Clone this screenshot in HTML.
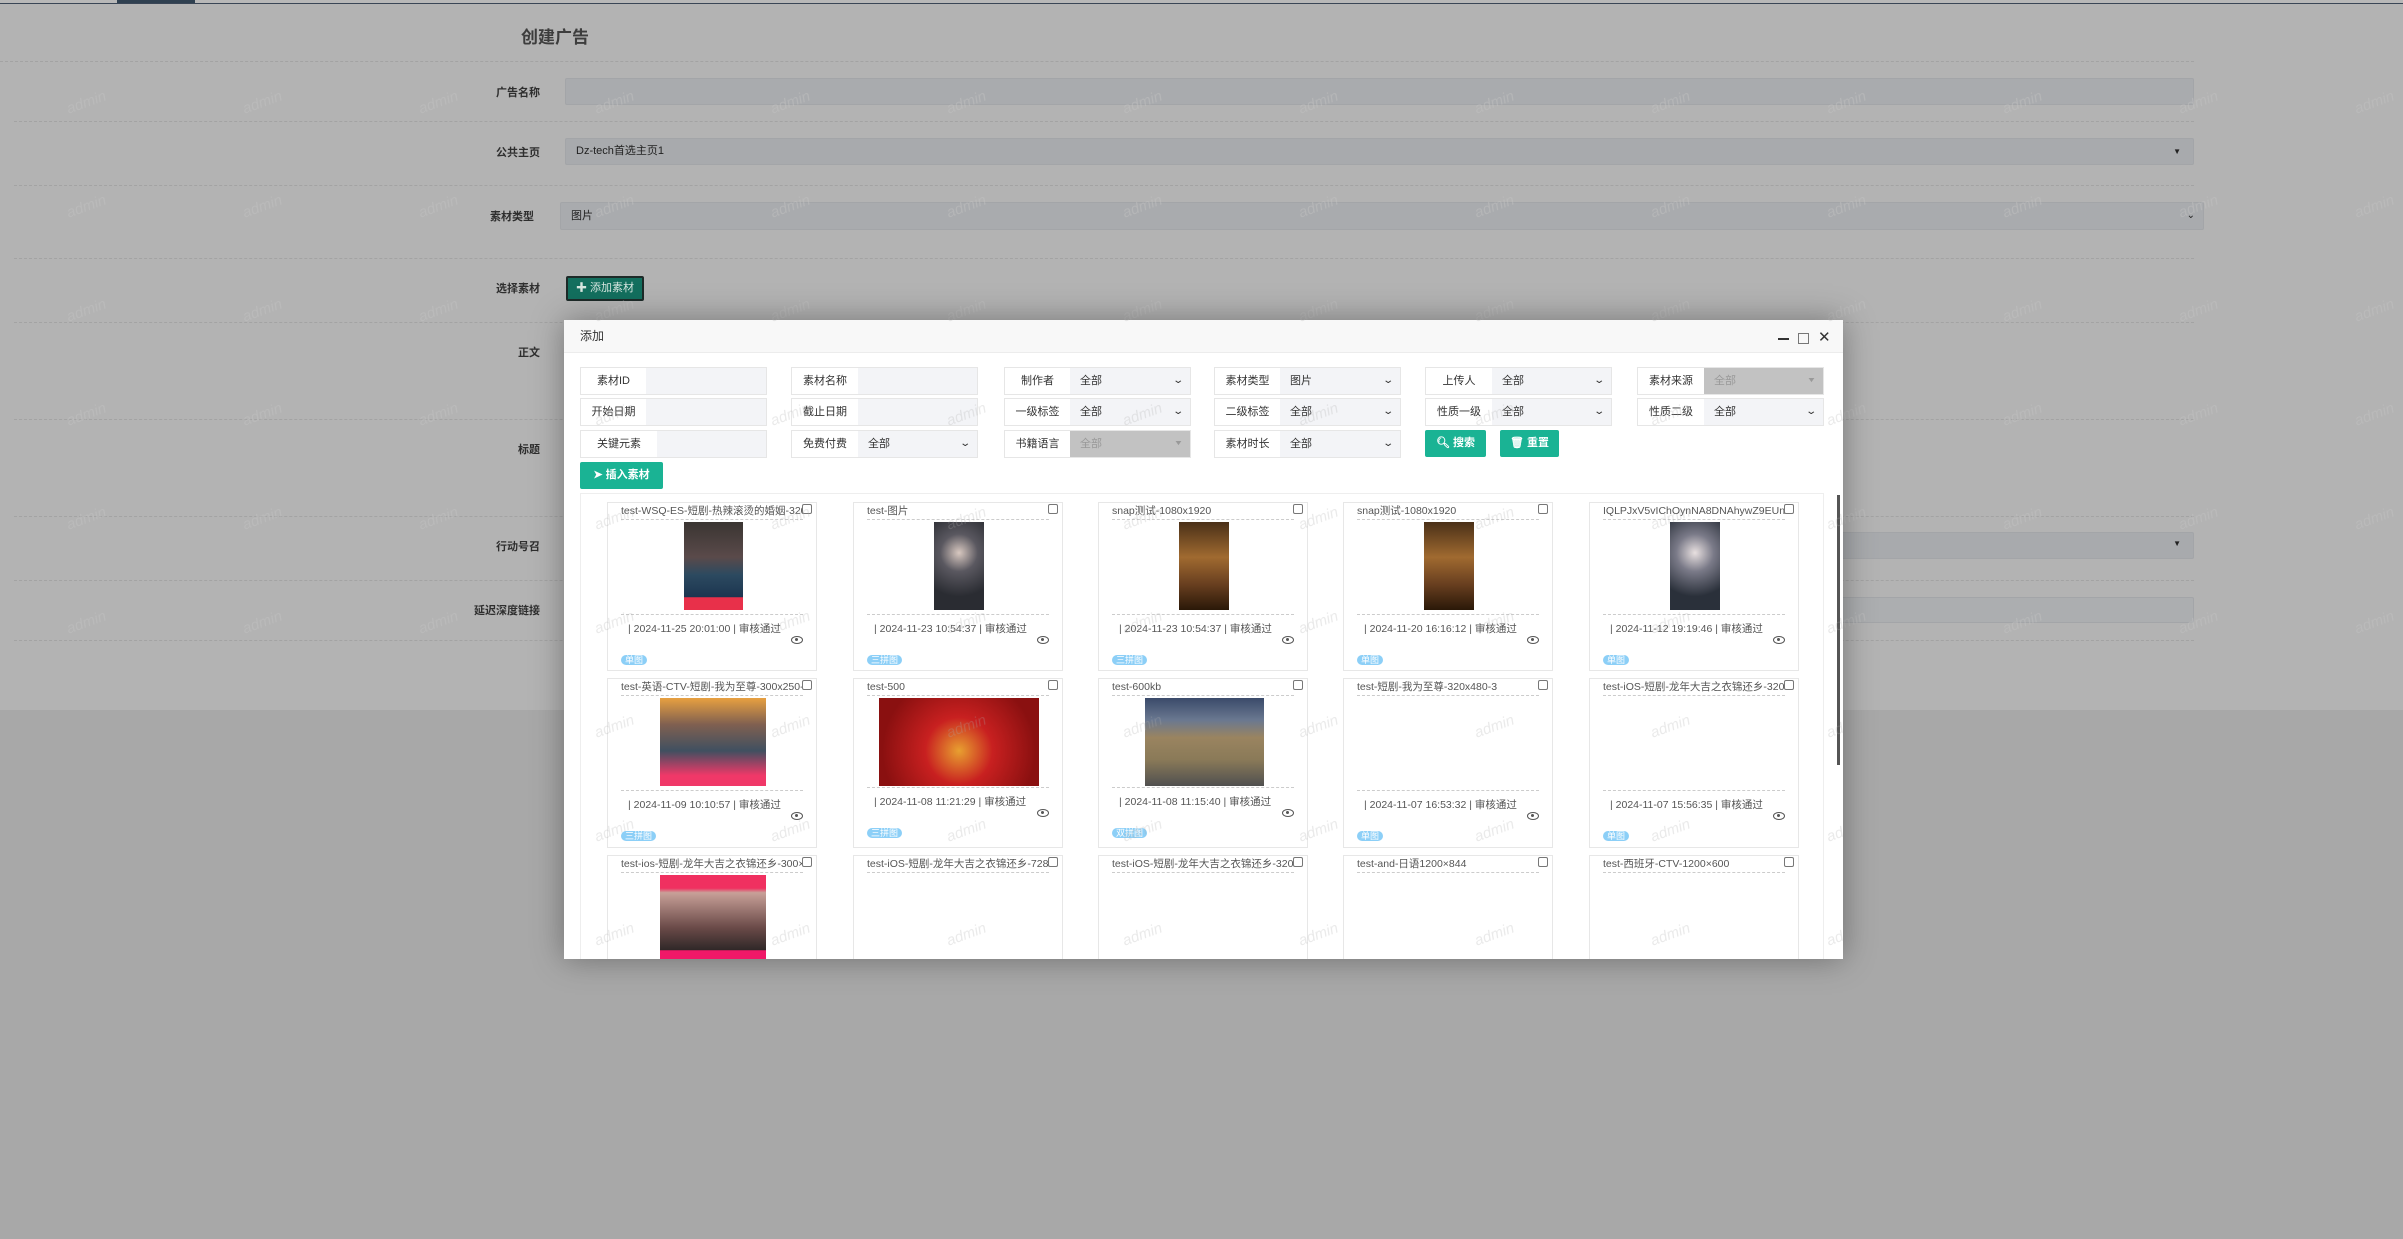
<!DOCTYPE html>
<html><head><meta charset="utf-8"><style>
*{box-sizing:border-box;margin:0;padding:0}
body{width:2403px;height:1239px;overflow:hidden;position:relative;background:#a8a8a8;font-family:"Liberation Sans","Noto Sans CJK SC",sans-serif;color:#333}
.abs{position:absolute}
#page{position:absolute;left:0;top:0;width:2403px;height:710px;background:#b3b3b3;overflow:hidden}
.dl{position:absolute;height:0;border-top:1px dashed #a3a3a3}
.lbl{position:absolute;font-size:11px;color:#2e2e2e;text-align:right;width:120px;font-weight:bold}
.inp{position:absolute;background:#a9abae;border:1px solid #a3a5a8;border-radius:2px;font-size:11px;color:#222;padding-left:10px}
.wm{position:absolute;font-size:15px;font-style:italic;transform:rotate(-20deg);white-space:nowrap}
#modal{position:absolute;left:564px;top:320px;width:1279px;height:639px;background:#fff;box-shadow:0 0 30px rgba(0,0,0,.35);overflow:hidden}
.hd{position:absolute;left:0;top:0;width:100%;height:33px;background:#f8f8f8;border-bottom:1px solid #ececec;font-size:12px;line-height:33px;padding-left:16px;color:#333}
.grp{position:absolute;height:28px;border:1px solid #e6e6e6;font-size:11px;color:#333}
.grp .l{position:absolute;left:0;top:0;height:26px;line-height:26px;text-align:center;background:#fff}
.grp .v{position:absolute;top:0;right:0;height:26px;line-height:26px;background:#f3f4f7;padding-left:10px}
.grp .v.dis{background:#c2c2c2;color:#999}
.car{position:absolute;right:8px;top:0;font-size:10px;color:#333;transform:scaleX(1.4)}
.btn{position:absolute;background:#1ab394;color:#fff;font-size:11px;font-weight:bold;text-align:center;border-radius:2px}
.card{position:absolute;width:210px;border:1px solid #e7e7e7;background:#fff}
.card .t{position:absolute;left:13px;right:13px;top:2px;height:15px;border-bottom:1px dashed #ccc;font-size:10.5px;line-height:13px;color:#555;white-space:nowrap;overflow:hidden}
.card .cb{position:absolute;right:4px;top:1px;width:10px;height:10px;border:1px solid #777;border-radius:2px;background:#fff}
.card .im{position:absolute}
.card .d2{position:absolute;left:13px;right:13px;border-top:1px dashed #ccc}
.card .dt{position:absolute;left:20px;font-size:10.5px;color:#555;white-space:nowrap}
.card .eye{position:absolute;right:13px;width:12px;height:8px;border:1.5px solid #555;border-radius:50%}
.card .eye:after{content:"";position:absolute;left:3px;top:1px;width:3px;height:3px;background:#555;border-radius:50%}
.card .bd{position:absolute;left:13px;height:10px;line-height:10px;padding:0 4px;background:#8ccff7;color:#fff;font-size:9px;border-radius:5px}
</style></head><body>
<div id="page">
 <div class="abs" style="left:0;top:0;width:2403px;height:4px;background:#b8b8b8;border-bottom:1px solid #3a4656"></div>
 <div class="abs" style="left:117px;top:0;width:78px;height:3px;background:#2f4050"></div>
 <div class="abs" style="left:521px;top:23px;font-size:17px;color:#3d3d3d;font-weight:bold">创建广告</div>
 <div class="dl" style="left:0;top:61px;width:2194px"></div>
 <div class="dl" style="left:14px;top:121px;width:2180px"></div>
 <div class="dl" style="left:14px;top:185px;width:2180px"></div>
 <div class="dl" style="left:14px;top:258px;width:2180px"></div>
 <div class="dl" style="left:14px;top:322px;width:2180px"></div>
 <div class="dl" style="left:14px;top:419px;width:2180px"></div>
 <div class="dl" style="left:14px;top:516px;width:2180px"></div>
 <div class="dl" style="left:14px;top:580px;width:2180px"></div>
 <div class="dl" style="left:14px;top:640px;width:2180px"></div>
 <div class="lbl" style="left:420px;top:84px">广告名称</div>
 <div class="inp" style="left:565px;top:78px;width:1629px;height:27px"></div>
 <div class="lbl" style="left:420px;top:144px">公共主页</div>
 <div class="inp" style="left:565px;top:138px;width:1629px;height:27px;line-height:25px;background:#a8aaad">Dz-tech首选主页1<span style="position:absolute;right:12px;font-size:8px">▼</span></div>
 <div class="lbl" style="left:414px;top:208px">素材类型</div>
 <div class="inp" style="left:560px;top:202px;width:1644px;height:28px;line-height:26px;font-weight:normal">图片<span style="position:absolute;right:8px;font-size:10px">⌄</span></div>
 <div class="lbl" style="left:420px;top:280px">选择素材</div>
 <div class="abs" style="left:566px;top:276px;width:78px;height:25px;background:#136f5e;border:2px solid #1d2a28;border-radius:2px;color:#d7e6e0;font-size:11px;line-height:21px;text-align:center">✚ 添加素材</div>
 <div class="lbl" style="left:420px;top:344px">正文</div>
 <div class="lbl" style="left:420px;top:441px">标题</div>
 <div class="lbl" style="left:420px;top:538px">行动号召</div>
 <div class="inp" style="left:565px;top:532px;width:1629px;height:27px;background:#a8aaad"><span style="position:absolute;right:12px;top:6px;font-size:8px">▼</span></div>
 <div class="lbl" style="left:420px;top:602px">延迟深度链接</div>
 <div class="inp" style="left:565px;top:597px;width:1629px;height:26px;background:#acaeb0"></div>
 <div id="wm1"></div>
</div>
<div id="modal">
 <div class="hd">添加</div>
 <div class="abs" style="left:1214px;top:18px;width:11px;height:1.5px;background:#333"></div>
 <div class="abs" style="left:1234px;top:13px;width:11px;height:11px;border:1.5px solid #777"></div>
 <div class="abs" style="left:1254px;top:8px;font-size:15px;color:#333">✕</div>
 <div id="filters"></div>
 <div class="btn" style="left:861px;top:110px;width:61px;height:27px;line-height:27px">🔍︎ 搜索</div>
 <div class="btn" style="left:936px;top:110px;width:59px;height:27px;line-height:27px">🗑︎ 重置</div>
 <div class="btn" style="left:16px;top:142px;width:83px;height:27px;line-height:27px">➤ 插入素材</div>
 <div class="abs" style="left:16px;top:173px;width:1244px;height:500px;border:1px solid #eee"></div>
 <div class="abs" style="left:1273px;top:175px;width:3px;height:270px;background:#555"></div>
 <div id="cards"></div>
 <div id="wm2"></div>
</div>
<script>
function wm(id,col,ox,oy,w,h){var s='';for(var i=0;i<15;i++)for(var j=0;j<13;j++){var x=88+176*i-ox-22,y=102+104*j-oy-8;if(x<-60||x>w||y<-30||y>h)continue;s+='<div class="wm" style="left:'+x+'px;top:'+y+'px;color:'+col+'">admin</div>';}document.getElementById(id).innerHTML=s;}
wm('wm1','rgba(195,195,195,.45)',0,0,2403,710);
wm('wm2','rgba(170,170,170,.25)',564,320,1279,639);
var F=[[["素材ID",65,0],["素材名称",66,0],["制作者",65,1],["素材类型",65,1,"图片"],["上传人",66,1],["素材来源",66,2]],
[["开始日期",65,0],["截止日期",66,0],["一级标签",65,1],["二级标签",65,1],["性质一级",66,1],["性质二级",66,1]],
[["关键元素",76,0],["免费付费",66,1],["书籍语言",65,2],["素材时长",65,1]]];
var gx=[16,227,440,650,861,1073],gy=[47,78,110],s='';
F.forEach(function(r,ri){r.forEach(function(g,ci){var w=187;s+='<div class="grp" style="left:'+gx[ci]+'px;top:'+gy[ri]+'px;width:'+w+'px"><div class="l" style="width:'+g[1]+'px">'+g[0]+'</div><div class="v'+(g[2]==2?' dis':'')+'" style="width:'+(w-2-g[1])+'px">'+(g[2]?(g[3]||'全部'):'')+(g[2]==1?'<span class="car">⌄</span>':g[2]==2?'<span class="car" style="font-size:7px;color:#999">▼</span>':'')+'</div></div>';});});
document.getElementById('filters').innerHTML=s;
var cx=[43,289,534,779,1025],ry=[182,358,535];
var C=[
[["test-WSQ-ES-短剧-热辣滚烫的婚姻-320",59,"linear-gradient(#3a3532,#5a4a4a 40%,#2c4a60 60%,#1c3550 85%,#e8304a 86%)","| 2024-11-25 20:01:00 | 审核通过","单图"],
["test-图片",50,"radial-gradient(circle at 50% 35%,#d8c8c0 0,#5a5860 30%,#2a2c32 70%)","| 2024-11-23 10:54:37 | 审核通过","三拼图"],
["snap测试-1080x1920",50,"linear-gradient(#4a3018,#a06a30 40%,#6a4020 70%,#2a1808)","| 2024-11-23 10:54:37 | 审核通过","三拼图"],
["snap测试-1080x1920",50,"linear-gradient(#4a3018,#a06a30 40%,#6a4020 70%,#2a1808)","| 2024-11-20 16:16:12 | 审核通过","单图"],
["IQLPJxV5vIChOynNA8DNAhywZ9EUna",50,"radial-gradient(circle at 50% 35%,#e8e0e0 0,#7a7a88 30%,#2a303a 70%)","| 2024-11-12 19:19:46 | 审核通过","单图"]],
[["test-英语-CTV-短剧-我为至尊-300x250-",106,"linear-gradient(#e8a040,#806050 30%,#405060 60%,#f03868 88%)","| 2024-11-09 10:10:57 | 审核通过","三拼图"],
["test-500",160,"radial-gradient(circle at 50% 60%,#e8a030 0,#c82020 35%,#8a1010 80%)","| 2024-11-08 11:21:29 | 审核通过","三拼图"],
["test-600kb",119,"linear-gradient(#3a4a6a,#6a7890 25%,#9a8460 45%,#8a7a58 70%,#505050)","| 2024-11-08 11:15:40 | 审核通过","双拼图"],
["test-短剧-我为至尊-320x480-3",0,"","| 2024-11-07 16:53:32 | 审核通过","单图"],
["test-iOS-短剧-龙年大吉之衣锦还乡-320",0,"","| 2024-11-07 15:56:35 | 审核通过","单图"]],
[["test-ios-短剧-龙年大吉之衣锦还乡-300×",106,"linear-gradient(#f03060 0,#f03060 15%,#c8a098 20%,#6a4a48 60%,#302828 85%,#f01868 86%)"],
["test-iOS-短剧-龙年大吉之衣锦还乡-728×",0],["test-iOS-短剧-龙年大吉之衣锦还乡-320×",0],["test-and-日语1200×844",0],["test-西班牙-CTV-1200×600",0]]];
s='';
C.forEach(function(r,ri){r.forEach(function(c,ci){var h=ri==0?169:ri==1?170:200;var top=ry[ri];
 s+='<div class="card" style="left:'+cx[ci]+'px;top:'+top+'px;height:'+h+'px"><div class="t">'+c[0]+'</div><div class="cb"></div>';
 var ih=88;if(c[1]){var iw=c[1];s+='<div class="im" style="left:'+(105-iw/2)+'px;top:19px;width:'+iw+'px;height:'+ih+'px;background:'+c[2]+'"></div>';}
 if(c[3]){var dl=(ri==1&&(ci==1||ci==2))?108:111;s+='<div class="d2" style="top:'+dl+'px"></div><div class="dt" style="top:'+(dl+7)+'px">'+c[3]+'</div><div class="eye" style="top:'+(dl+22)+'px"></div><div class="bd" style="top:'+(dl+41)+'px">'+c[4]+'</div>';}
 s+='</div>';});});
document.getElementById('cards').innerHTML=s;
</script>
</body></html>
